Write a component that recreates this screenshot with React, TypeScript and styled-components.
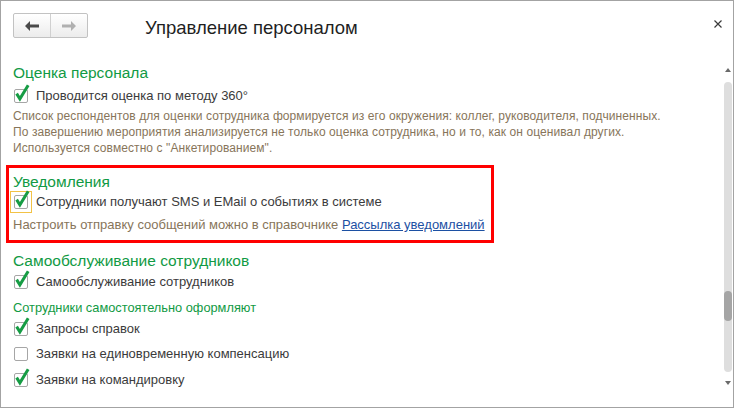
import React from "react";
import styled, { createGlobalStyle } from "styled-components";

const GlobalStyle = createGlobalStyle`
  html, body {
    margin: 0;
    padding: 0;
    background: #fff;
  }
  body {
    font-family: "Liberation Sans", Arial, sans-serif;
  }
`;

const Window = styled.div`
  width: 734px;
  height: 408px;
  box-sizing: border-box;
  border: 1px solid #a3a3a3;
  background: #fff;
  display: flex;
  flex-direction: column;
  overflow: hidden;
`;

const Header = styled.div`
  height: 54px;
  flex-shrink: 0;
  display: flex;
  align-items: flex-start;
  padding: 12px 0 0 12px;
  box-sizing: border-box;
`;

const NavGroup = styled.div`
  display: flex;
  height: 25px;
  box-sizing: border-box;
  border: 1px solid #c2c2c2;
  border-radius: 2px;
  background: linear-gradient(#ffffff, #ececec);
`;

const NavButton = styled.div<{ $first?: boolean }>`
  width: 36px;
  height: 23px;
  display: flex;
  align-items: center;
  justify-content: center;
  border-right: ${({ $first }) => ($first ? "1px solid #d0d0d0" : "none")};
`;

const Title = styled.div`
  margin: 3px 0 0 57px;
  font-size: 18.5px;
  line-height: 24px;
  color: #1f1f1f;
  flex: 1;
`;

const Close = styled.div`
  width: 8px;
  height: 8px;
  margin: 7px 11px 0 0;
  display: flex;
`;

const Body = styled.div`
  flex: 1;
  display: flex;
  min-height: 0;
`;

const Content = styled.div`
  flex: 1;
  padding: 9px 0 0 12px;
  display: flex;
  flex-direction: column;
  align-items: flex-start;
`;

const GroupTitle = styled.div<{ $mt?: number }>`
  font-size: 15.5px;
  line-height: 18px;
  color: #119a44;
  margin-top: ${({ $mt }) => $mt ?? 0}px;
`;

const SubTitle = styled.div`
  font-size: 12.8px;
  line-height: 20px;
  color: #119a44;
  margin-top: 5px;
`;

const CheckRow = styled.div<{ $mt?: number }>`
  display: flex;
  align-items: center;
  height: 22px;
  margin-top: ${({ $mt }) => $mt ?? 0}px;
`;

const BoxWrap = styled.div<{ $focused?: boolean }>`
  width: 22px;
  height: 22px;
  box-sizing: border-box;
  margin-left: -3px;
  display: flex;
  align-items: center;
  justify-content: center;
  border: 1px solid ${({ $focused }) => ($focused ? "#f2c246" : "transparent")};
`;

const Box = styled.span`
  position: relative;
  width: 14px;
  height: 14px;
  box-sizing: border-box;
  border: 1px solid #a6a6a6;
  border-radius: 2px;
  background: #fff;
`;

const CheckMark = styled.svg`
  position: absolute;
  left: -1px;
  top: -1px;
  overflow: visible;
`;

const Label = styled.span`
  margin-left: 4px;
  font-size: 13px;
  line-height: 22px;
  color: #3b3b3b;
`;

const Note = styled.div`
  font-size: 12px;
  letter-spacing: 0.085px;
  line-height: 16px;
  color: #87755a;
  margin-top: 1px;
`;

const Hint = styled.div`
  font-size: 13px;
  line-height: 20px;
  color: #87755a;
  margin-top: 2px;
`;

const Link = styled.a`
  color: #1c50a3;
  text-decoration: underline;
`;

const Highlight = styled.div`
  width: 488px;
  box-sizing: border-box;
  margin: 9px 0 0 -7px;
  padding: 5px 4px 5px 4px;
  border: 3px solid #ff0000;
  display: flex;
  flex-direction: column;
  align-items: flex-start;
`;

const Scroll = styled.div`
  width: 8px;
  margin-right: 1px;
  display: flex;
  flex-direction: column;
  align-items: center;
  padding-top: 13px;
`;

const Arrow = styled.div<{ $down?: boolean }>`
  width: 0;
  height: 0;
  border-left: 3px solid transparent;
  border-right: 3px solid transparent;
  ${({ $down }) =>
    $down ? "border-top: 4px solid #6a6a6a;" : "border-bottom: 4px solid #6a6a6a;"}
`;

const Track = styled.div`
  width: 8px;
  height: 290px;
  margin: 10px 0 9px;
  border-radius: 4px;
  background: #dedede;
  padding-top: 209px;
  box-sizing: border-box;
`;

const Thumb = styled.div`
  width: 8px;
  height: 30px;
  border-radius: 4px;
  background: #a5a5a5;
`;

const Check: React.FC<{ checked?: boolean; focused?: boolean; label: string; mt?: number }> = ({
  checked,
  focused,
  label,
  mt,
}) => (
  <CheckRow $mt={mt}>
    <BoxWrap $focused={focused}>
      <Box>
        {checked && (
          <CheckMark width="14" height="14" viewBox="0 0 14 14">
            <path d="M2.6 4.6 L5.9 9.8 L14.2 -3.8" fill="none" stroke="#169c44" strokeWidth="3" />
          </CheckMark>
        )}
      </Box>
    </BoxWrap>
    <Label>{label}</Label>
  </CheckRow>
);

const App: React.FC = () => {
  return (
    <>
      <GlobalStyle />
      <Window>
        <Header>
          <NavGroup>
            <NavButton $first>
              <svg width="14" height="10" viewBox="0 0 14 10">
                <path d="M0 5 L5 0 L5 3.5 L14 3.5 L14 6.5 L5 6.5 L5 10 Z" fill="#4a4a4a" />
              </svg>
            </NavButton>
            <NavButton>
              <svg width="14" height="10" viewBox="0 0 14 10">
                <path d="M14 5 L9 0 L9 3.5 L0 3.5 L0 6.5 L9 6.5 L9 10 Z" fill="#b0b0b0" />
              </svg>
            </NavButton>
          </NavGroup>
          <Title>Управление персоналом</Title>
          <Close>
            <svg width="8" height="8" viewBox="0 0 8 8">
              <path d="M0.5 0.5 L7.5 7.5 M7.5 0.5 L0.5 7.5" stroke="#3a3a3a" strokeWidth="1.2" />
            </svg>
          </Close>
        </Header>
        <Body>
          <Content>
            <GroupTitle>Оценка персонала</GroupTitle>
            <Check checked label="Проводится оценка по методу 360°" mt={3} />
            <Note>
              Список респондентов для оценки сотрудника формируется из его окружения: коллег, руководителя, подчиненных.
              <br />
              По завершению мероприятия анализируется не только оценка сотрудника, но и то, как он оценивал других.
              <br />
              Используется совместно с "Анкетированием".
            </Note>
            <Highlight>
              <GroupTitle>Уведомления</GroupTitle>
              <Check checked focused label="Сотрудники получают SMS и EMail о событиях в системе" />
              <Hint>
                Настроить отправку сообщений можно в справочнике <Link>Рассылка уведомлений</Link>
              </Hint>
            </Highlight>
            <GroupTitle $mt={9}>Самообслуживание сотрудников</GroupTitle>
            <Check checked label="Самообслуживание сотрудников" mt={1} />
            <SubTitle>Сотрудники самостоятельно оформляют</SubTitle>
            <Check checked label="Запросы справок" />
            <Check label="Заявки на единовременную компенсацию" mt={3} />
            <Check checked label="Заявки на командировку" mt={4} />
          </Content>
          <Scroll>
            <Arrow />
            <Track>
              <Thumb />
            </Track>
            <Arrow $down />
          </Scroll>
        </Body>
      </Window>
    </>
  );
};

export default App;
